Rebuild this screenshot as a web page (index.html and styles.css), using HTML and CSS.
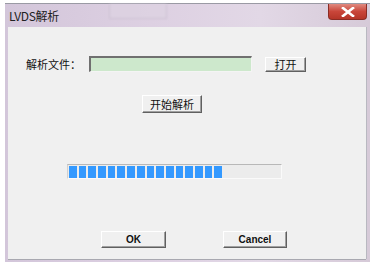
FILE: index.html
```html
<!doctype html>
<html>

<head>
    <title>LVDS解析</title>
    <meta charset="utf-8" />
    <link rel="stylesheet" href="styles.css">
</head>

<body>
    <div class="window">
        <div class="titlebar">
            <span class="title">LVDS解析</span>
            <span class="ghost"></span>
            <span class="close">
                <svg width="14" height="10" viewBox="0 0 14 10">
                    <path d="M2 1 L12 9 M12 1 L2 9" stroke="#fff" stroke-width="2.6" stroke-linecap="square" />
                </svg>
            </span>
        </div>
        <div class="client">
            <div class="row file-row">
                <span class="label">解析文件：</span>
                <span class="field"></span>
                <button class="btn btn-open">打开</button>
            </div>
            <div class="row start-row">
                <button class="btn btn-start">开始解析</button>
            </div>
            <div class="row progress-row">
                <div class="progress">
                    <div class="segments">
                        <i></i><i></i><i></i><i></i><i></i><i></i><i></i><i></i>
                        <i></i><i></i><i></i><i></i><i></i><i></i><i></i><i></i>
                    </div>
                </div>
            </div>
            <div class="row action-row">
                <button class="btn btn-action btn-ok">OK</button>
                <button class="btn btn-action btn-cancel">Cancel</button>
            </div>
        </div>
    </div>
</body>

</html>
```

FILE: styles.css
```css
body { margin: 0; background: #fff; font-family: "Noto Sans CJK SC", "Liberation Sans", sans-serif; }
.window { margin: 3px 0 0 5px; width: 365px; height: 259px; display: flex; flex-direction: column; background: linear-gradient(90deg, #d3c6da, #ddd0e2 40%, #e2d8e6 70%, #d6cad8); box-shadow: inset 0 1px 0 #9a9aa4; }
.titlebar { height: 24px; display: flex; align-items: center; position: relative; }
.title { margin-left: 4px; font-size: 12px; color: #222; letter-spacing: -0.3px; }
.ghost { position: absolute; left: 104px; top: 1px; width: 58px; height: 15px; box-sizing: border-box; border: 1px solid #c8bccd; border-top: 0; background: #ddd3e2; filter: blur(1px); opacity: 0.7; }
.close { margin-left: auto; margin-right: 3px; align-self: flex-start; margin-top: 1px; width: 39px; height: 16px; display: flex; align-items: center; justify-content: center; background: linear-gradient(#e08a80, #c9463a 50%, #b53528); border: 1px solid #8a2c24; border-top: 0; border-radius: 0 0 4px 4px; box-sizing: border-box; }
.client { flex: 1; margin: 0 4px 3px 3px; background: #f0f0f0; padding-top: 29px; box-shadow: 1px 0 0 #b8b8c0, 0 1px 0 #a8a8b0; }
.row { display: flex; align-items: center; }
.file-row { height: 16px; }
.label { margin-left: 18px; width: 63px; font-size: 11px; color: #111; }
.field { width: 163px; height: 16px; box-sizing: border-box; background: #cde8cc; border-top: 2px solid #707070; border-left: 2px solid #707070; border-right: 1px solid #f4f4f4; border-bottom: 1px solid #f4f4f4; }
.btn { padding: 0; font-family: "Noto Sans CJK SC", "Liberation Sans", sans-serif; font-size: 11px; color: #111; background: #f0f0f0; box-sizing: border-box; border: 1px solid; border-color: #fff #606060 #606060 #fff; box-shadow: inset -1px -1px 0 #a0a0a0; line-height: 1; }
.btn-open { margin-left: 13px; width: 41px; height: 15px; }
.start-row { margin-top: 23px; }
.btn-start { margin-left: 134px; width: 60px; height: 18px; }
.progress-row { margin-top: 51px; }
.progress { margin-left: 59px; width: 215px; height: 15px; box-sizing: border-box; background: #ececec; border-top: 1px solid #b8b8b8; border-left: 1px solid #d0d0d0; border-right: 1px solid #fafafa; border-bottom: 1px solid #fafafa; padding: 1px 0 0 1px; }
.segments { width: 153px; height: 12px; display: flex; gap: 2px; }
.segments i { flex: 1; background: #3399ff; }
.action-row { margin-top: 52px; }
.btn-action { height: 17px; font-family: "Liberation Sans", sans-serif; font-size: 10px; font-weight: bold; }
.btn-ok { margin-left: 93px; width: 65px; }
.btn-cancel { margin-left: 57px; width: 64px; }
```
